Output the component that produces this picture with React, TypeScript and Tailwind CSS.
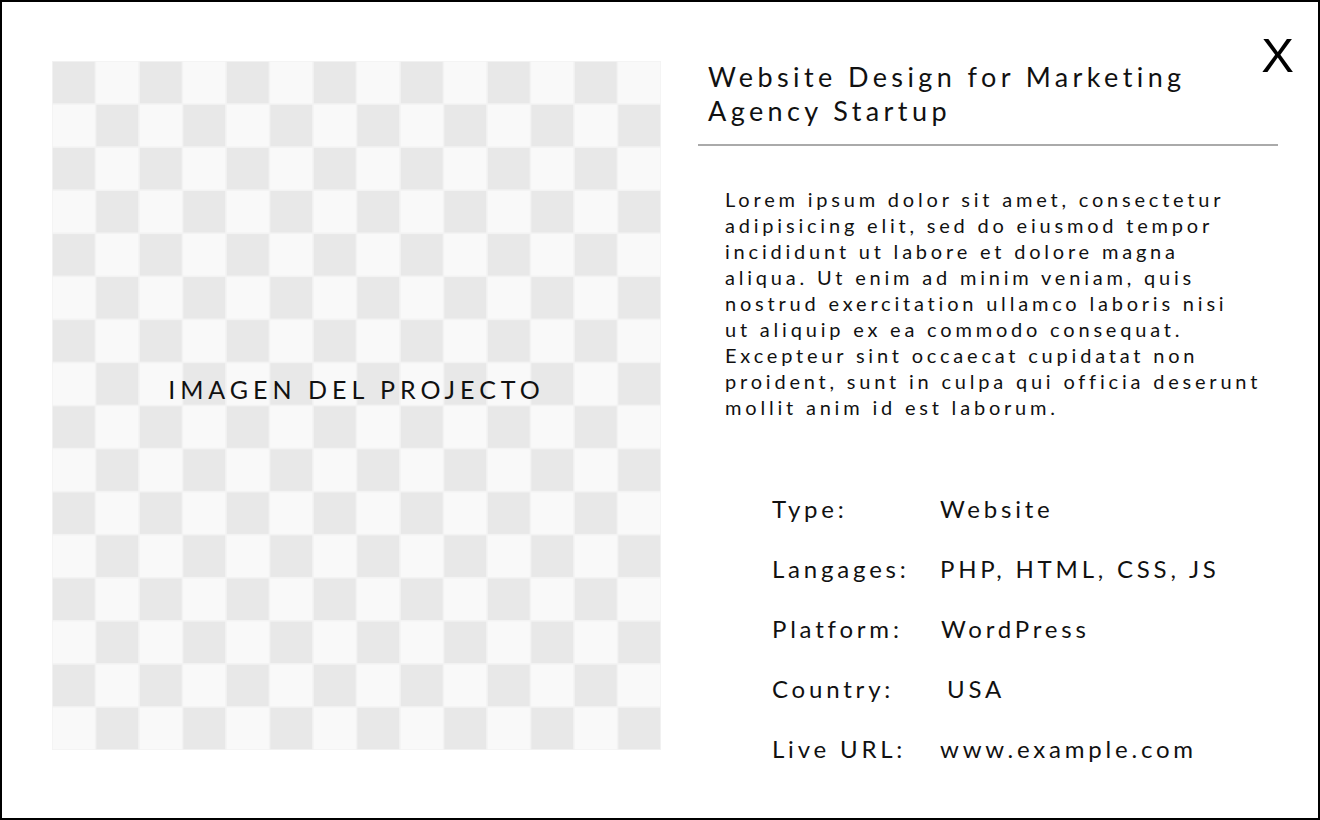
import React from "react";

function Checker() {
  const cols = 14;
  const rows = 16;
  const w = 609 / cols;
  const h = 689 / rows;
  const cells: React.ReactNode[] = [];
  for (let r = 0; r < rows; r++) {
    for (let c = 0; c < cols; c++) {
      const dark = (r + c) % 2 === 0;
      cells.push(
        <rect
          key={`${r}-${c}`}
          x={c * w + 0.8}
          y={r * h + 0.8}
          width={w - 1.6}
          height={h - 1.6}
          fill={dark ? "#e8e8e8" : "#f9f9f9"}
        />
      );
    }
  }
  return (
    <svg width={609} height={689} viewBox="0 0 609 689" className="absolute inset-0">
      <rect x={0} y={0} width={609} height={689} fill="#f3f3f3" />
      {cells}
    </svg>
  );
}

const rows: [string, string, string][] = [
  ["Type:", "Website", "pl-0"],
  ["Langages:", "PHP, HTML, CSS, JS", "pl-0"],
  ["Platform:", "WordPress", "pl-[1px]"],
  ["Country:", "USA", "pl-[7px]"],
  ["Live URL:", "www.example.com", "pl-0"],
];

const lines = [
  "Lorem ipsum dolor sit amet, consectetur",
  "adipisicing elit, sed do eiusmod tempor",
  "incididunt ut labore et dolore magna",
  "aliqua. Ut enim ad minim veniam, quis",
  "nostrud exercitation ullamco laboris nisi",
  "ut aliquip ex ea commodo consequat.",
  "Excepteur sint occaecat cupidatat non",
  "proident, sunt in culpa qui officia deserunt",
  "mollit anim id est laborum.",
];

export default function App() {
  return (
    <div
      className="relative w-[1320px] h-[820px] border-2 border-black bg-white flex text-[#111]"
      style={{ fontFamily: 'Lato, "Noto Sans", sans-serif' }}
    >
      <div className="pl-[50px] pt-[59px]">
        <div className="relative w-[609px] h-[689px] flex items-center justify-center pb-[31px]">
          <Checker />
          <span className="relative text-[25px] tracking-[5px] text-[#111] whitespace-nowrap">IMAGEN DEL PROJECTO</span>
        </div>
      </div>

      <div className="ml-[37px] w-[580px] flex flex-col pt-[58px]">
        <h1 className="pl-[10px] text-[27px] leading-[34px] tracking-[4.4px] font-normal pb-[16px] border-b-2 border-[#aaaaaa] whitespace-nowrap">
          Website Design for Marketing
          <br />
          Agency Startup
        </h1>
        <p className="pl-[27px] mt-[40px] text-[20px] leading-[26px] tracking-[3.8px] whitespace-nowrap">
          {lines.map((l, i) => (
            <React.Fragment key={i}>
              {l}
              {i < lines.length - 1 && <br />}
            </React.Fragment>
          ))}
        </p>
        <div className="pl-[74px] mt-[73px] flex flex-col gap-[28px]">
          {rows.map(([k, v, pad]) => (
            <div key={k} className="flex text-[24px] leading-[32px] tracking-[3.8px] whitespace-nowrap">
              <span className="w-[168px]">{k}</span>
              <span className={pad}>{v}</span>
            </div>
          ))}
        </div>
      </div>

      <div
        className="absolute top-[29px] right-[24px] text-[49px] leading-none text-black"
        style={{ fontFamily: '"Liberation Sans", Arial, sans-serif' }}
      >
        X
      </div>
    </div>
  );
}
